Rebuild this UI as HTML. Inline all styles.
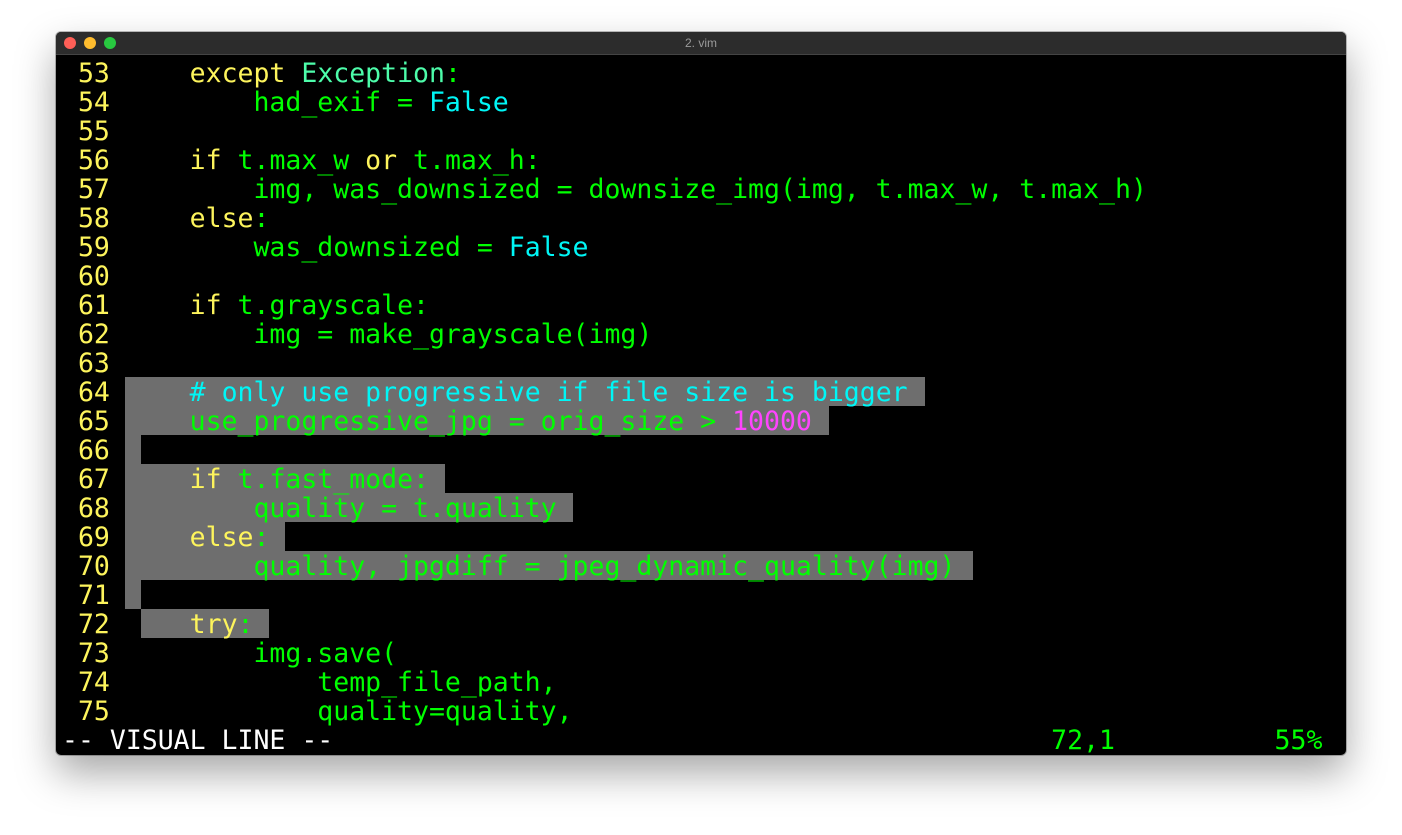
<!DOCTYPE html>
<html><head><meta charset="utf-8"><style>
body{margin:0;width:1402px;height:835px;background:#fff;overflow:hidden;position:relative}
.win{position:absolute;left:56px;top:32px;width:1290px;height:723px;background:#000;border-radius:5px;overflow:hidden;box-shadow:0 18px 40px rgba(0,0,0,.35),0 0 0 1px rgba(0,0,0,.25)}
.tb{position:absolute;left:0;top:0;width:100%;height:22px;background:#2c2c2c;border-bottom:1px solid #444;font:12px "Liberation Sans",sans-serif;color:#9a9a9a;text-align:center;line-height:22px}
.dot{position:absolute;top:5px;width:12px;height:12px;border-radius:50%}
.hl{position:absolute;height:29px;background:#6e6e6e}
pre{position:absolute;left:6px;top:27px;margin:0;font:26.5px "DejaVu Sans Mono",monospace;line-height:29px;color:#0f0;white-space:pre}
.y{color:#fdf45c}.g{color:#1cf51c}.c{color:#00f6f6}.t{color:#4dfcaa}.m{color:#ff44ff}.w{color:#fff}
</style></head><body>
<div class="win">
<div class="tb">2. vim</div>
<div class="dot" style="left:8px;background:#fe5f57"></div>
<div class="dot" style="left:28px;background:#febc2e"></div>
<div class="dot" style="left:48px;background:#28c840"></div>
<div class="hl" style="top:345px;left:69px;width:800px"></div>
<div class="hl" style="top:374px;left:69px;width:704px"></div>
<div class="hl" style="top:403px;left:69px;width:16px"></div>
<div class="hl" style="top:432px;left:69px;width:320px"></div>
<div class="hl" style="top:461px;left:69px;width:448px"></div>
<div class="hl" style="top:490px;left:69px;width:160px"></div>
<div class="hl" style="top:519px;left:69px;width:848px"></div>
<div class="hl" style="top:548px;left:69px;width:16px"></div>
<div class="hl" style="top:577px;left:85px;width:128px"></div>
<pre><span class="y"> 53 </span>    <span class="y">except</span> <span class="t">Exception</span>:
<span class="y"> 54 </span>        had_exif = <span class="c">False</span>
<span class="y"> 55 </span>
<span class="y"> 56 </span>    <span class="y">if</span> t.max_w <span class="y">or</span> t.max_h:
<span class="y"> 57 </span>        img, was_downsized = downsize_img(img, t.max_w, t.max_h)
<span class="y"> 58 </span>    <span class="y">else</span>:
<span class="y"> 59 </span>        was_downsized = <span class="c">False</span>
<span class="y"> 60 </span>
<span class="y"> 61 </span>    <span class="y">if</span> t.grayscale:
<span class="y"> 62 </span>        img = make_grayscale(img)
<span class="y"> 63 </span>
<span class="y"> 64 </span>    <span class="c"># only use progressive if file size is bigger</span>
<span class="y"> 65 </span>    use_progressive_jpg = orig_size &gt; <span class="m">10000</span>
<span class="y"> 66 </span>
<span class="y"> 67 </span>    <span class="y">if</span> t.fast_mode:
<span class="y"> 68 </span>        quality = t.quality
<span class="y"> 69 </span>    <span class="y">else</span>:
<span class="y"> 70 </span>        quality, jpgdiff = jpeg_dynamic_quality(img)
<span class="y"> 71 </span>
<span class="y"> 72 </span>    <span class="y">try</span>:
<span class="y"> 73 </span>        img.save(
<span class="y"> 74 </span>            temp_file_path,
<span class="y"> 75 </span>            quality=quality,
<span class="w">-- VISUAL LINE --</span>                                             72,1          55%</pre>
</div>
</body></html>
